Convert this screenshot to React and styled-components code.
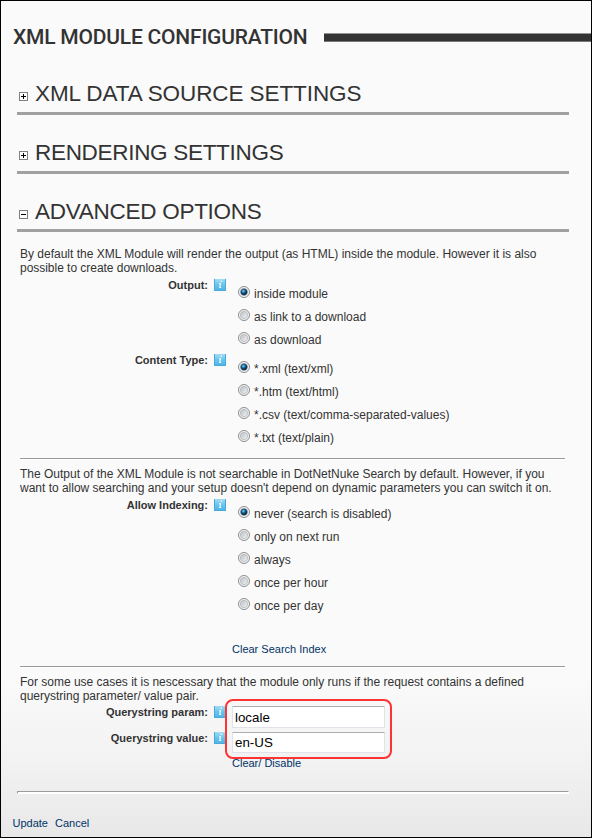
import React from "react";
import styled, { createGlobalStyle } from "styled-components";

const GlobalStyle = createGlobalStyle`
  body { margin: 0; }
  * { box-sizing: border-box; }
`;

const Page = styled.main`
  width: 592px;
  height: 838px;
  overflow: hidden;
  border: 1px solid #000;
  background: linear-gradient(#fafafa 0, #fafafa 675px, #f2f2f2 760px, #e8e8e8 836px);
  font: 12px/14px "Liberation Sans", Arial, sans-serif;
  color: #333;
  white-space: nowrap;
`;

const Header = styled.header`
  display: flex;
  align-items: center;
  height: 72px;
  padding-left: 12px;
`;

const Title = styled.h1`
  width: 311px;
  margin: 0;
  font: 500 21px/24px Roboto, sans-serif;
  letter-spacing: ${(p) => p.$track}px;
`;

const TitleBar = styled.div`
  flex: 1;
  height: 9px;
  background: #333;
  border-top: 1px solid #929492;
  border-bottom: 1px solid #777;
`;

const SectionHeading = styled.h2`
  display: flex;
  align-items: center;
  gap: 7px;
  width: 552px;
  height: ${(p) => p.$height || 42}px;
  margin: 0 0 17px 16px;
  padding: ${(p) => (p.$height ? 3 : 2)}px 0 0 2px;
  border-bottom: 3px solid #a0a0a0;
  font-size: 22.5px;
  line-height: 26px;
  font-weight: 400;
`;

const ToggleIcon = styled.svg`
  width: 9px;
  height: 9px;
  margin-top: 6px;
`;

const Track = styled.span`
  letter-spacing: ${(p) => p.$track || 0}px;
`;

const Panel = styled.section`
  width: 545px;
  height: ${(p) => p.$height}px;
  margin-left: 19px;
  margin-top: ${(p) => p.$gap || 0}px;
  border-bottom: ${(p) => (p.$last ? "0" : "1px solid #9a9a9a")};
  box-shadow: ${(p) => (p.$last ? "none" : "0 1px #fff")};
`;

const Intro = styled.p`
  margin: 0;
`;

const Line = styled.span`
  display: block;
  letter-spacing: ${(p) => p.$track || 0}px;
`;

const Field = styled.div`
  display: grid;
  grid-template-columns: 188px 18px 1fr;
  align-items: start;
`;

const Label = styled.span`
  padding-top: ${(p) => (p.$top === undefined ? 4 : p.$top)}px;
  line-height: 13px;
  font-size: 11px;
  font-weight: 700;
  text-align: right;
`;

const InfoSvg = styled.svg`
  width: 12px;
  height: 12px;
  margin: ${(p) => p.$top}px 0 0 6px;
`;

const Options = styled.div`
  padding: 6px 0 0 12px;
`;

const Option = styled.label`
  display: flex;
  align-items: center;
  gap: 4px;
  height: 23px;
`;

const OptionText = styled.span`
  padding-top: 2px;
`;

const RadioSvg = styled.svg`
  width: 12px;
  height: 12px;
  margin-bottom: 2px;
`;

const Link = styled.a`
  display: block;
  font-size: 11px;
  line-height: 13px;
  color: #003366;
  margin: ${(p) => p.$top || 0}px 0 0 ${(p) => p.$left || 0}px;
`;

const QueryFields = styled.div`
  position: relative;
`;

const InputCell = styled.div`
  height: 26px;
  padding: 3px 0 0 6px;
`;

const TextInput = styled.input`
  display: block;
  width: 153px;
  height: ${(p) => p.$height}px;
  margin: 0;
  padding: 0 2px;
  border: 1px solid #e2e3ea;
  border-top-color: #abadb3;
  border-radius: 1px;
  background: #fff;
  color: #000;
  font: 13.33px/16px "Liberation Sans", Arial, sans-serif;
  letter-spacing: ${(p) => p.$track || 0}px;
`;

const Highlight = styled.div`
  position: absolute;
  left: 205px;
  top: -4px;
  width: 167px;
  height: 60px;
  border: 2px solid #f33;
  border-radius: 8px;
`;

const Divider = styled.div`
  width: 552px;
  height: 3px;
  margin-left: 16px;
  border: 1px solid #9a9a9a;
  border-right-color: #fff;
  border-bottom-color: #fff;
  background: #fff;
`;

const Actions = styled.footer`
  display: flex;
  gap: 7px;
  padding: 23px 0 0 11.5px;
`;

function Toggle({ open }) {
  return (
    <ToggleIcon viewBox="0 0 9 9" shapeRendering="crispEdges">
      <rect x="0.5" y="0.5" width="8" height="8" fill="#fff" stroke="#808080" />
      <path d={open ? "M2 4.5h5" : "M2 4.5h5M4.5 2v5"} stroke="#000" />
    </ToggleIcon>
  );
}

function Info({ top = 4 }) {
  return (
    <InfoSvg viewBox="0 0 12 12" $top={top}>
      <defs>
        <linearGradient id="info" x2="0" y2="1">
          <stop stopColor="#a4dcf2" />
          <stop offset=".45" stopColor="#6cc6ee" />
          <stop offset="1" stopColor="#48b4e8" />
        </linearGradient>
      </defs>
      <rect width="12" height="12" fill="url(#info)" />
      <path d="M.5 0v11.5h11V0" fill="none" stroke="#4aa8da" />
      <path d="M6.6 2.4h1.3M5 4.7h1.5L5.8 8.5h1.3" fill="none" stroke="#fff" strokeWidth="1.1" />
    </InfoSvg>
  );
}

function Radio({ checked }) {
  return (
    <RadioSvg viewBox="0 0 12 12">
      <defs>
        <linearGradient id="well" x2="1" y2="1">
          <stop stopColor="#b9bec3" />
          <stop offset="1" stopColor="#f4f4f4" />
        </linearGradient>
        <radialGradient id="dot" cx=".4" cy=".35">
          <stop stopColor="#8ce0f8" />
          <stop offset=".45" stopColor="#2080b4" />
          <stop offset="1" stopColor="#0b2c4c" />
        </radialGradient>
      </defs>
      <circle cx="6" cy="6" r="5.5" fill="#f6f6f6" stroke="#8b8d8f" />
      <circle cx="6" cy="6" r="3.7" fill="url(#well)" stroke="#b4b8bc" strokeWidth=".8" />
      {checked && <circle cx="6" cy="6" r="3.1" fill="url(#dot)" stroke="#173f60" strokeWidth=".6" />}
    </RadioSvg>
  );
}

function RadioField({ label, options }) {
  return (
    <Field>
      <Label>{label}</Label>
      <Info />
      <Options>
        {options.map((text, i) => (
          <Option key={text}>
            <Radio checked={i === 0} />
            <OptionText>{text}</OptionText>
          </Option>
        ))}
      </Options>
    </Field>
  );
}

export default function App() {
  return (
    <Page>
      <GlobalStyle />
      <Header>
        <Title $track={-0.21}>XML MODULE CONFIGURATION</Title>
        <TitleBar />
      </Header>
      <SectionHeading><Toggle /><Track $track={-0.08}>XML DATA SOURCE SETTINGS</Track></SectionHeading>
      <SectionHeading><Toggle /><Track $track={-0.3}>RENDERING SETTINGS</Track></SectionHeading>
      <SectionHeading $height={41}><Toggle open /><Track $track={-0.27}>ADVANCED OPTIONS</Track></SectionHeading>

      <Panel $height={212} $gap={-2}>
        <Intro>
          <Line>By default the XML Module will render the output (as HTML) inside the module. However it is also</Line>
          <Line $track={-0.03}>possible to create downloads.</Line>
        </Intro>
        <RadioField label="Output:" options={["inside module", "as link to a download", "as download"]} />
        <RadioField
          label="Content Type:"
          options={["*.xml (text/xml)", "*.htm (text/html)", "*.csv (text/comma-separated-values)", "*.txt (text/plain)"]}
        />
      </Panel>

      <Panel $height={200} $gap={8}>
        <Intro>
          <Line>The Output of the XML Module is not searchable in DotNetNuke Search by default. However, if you</Line>
          <Line $track={-0.01}>want to allow searching and your setup doesn't depend on dynamic parameters you can switch it on.</Line>
        </Intro>
        <RadioField
          label="Allow Indexing:"
          options={["never (search is disabled)", "only on next run", "always", "once per hour", "once per day"]}
        />
        <Link $top={27} $left={212}>Clear Search Index</Link>
      </Panel>

      <Panel $height={116} $gap={8} $last>
        <Intro>
          <Line $track={-0.01}>For some use cases it is nescessary that the module only runs if the request contains a defined</Line>
          <Line>querystring parameter/ value pair.</Line>
        </Intro>
        <QueryFields>
          <Field>
            <Label $top={3}>Querystring param:</Label>
            <Info top={3} />
            <InputCell><TextInput $height={22} defaultValue="locale" /></InputCell>
          </Field>
          <Field>
            <Label $top={3}>Querystring value:</Label>
            <Info top={3} />
            <InputCell><TextInput $height={21} defaultValue="en-US" /></InputCell>
          </Field>
          <Link $top={2} $left={212}>Clear/ Disable</Link>
          <Highlight />
        </QueryFields>
      </Panel>
      <Divider />
      <Actions>
        <Link>Update</Link>
        <Link>Cancel</Link>
      </Actions>
    </Page>
  );
}
